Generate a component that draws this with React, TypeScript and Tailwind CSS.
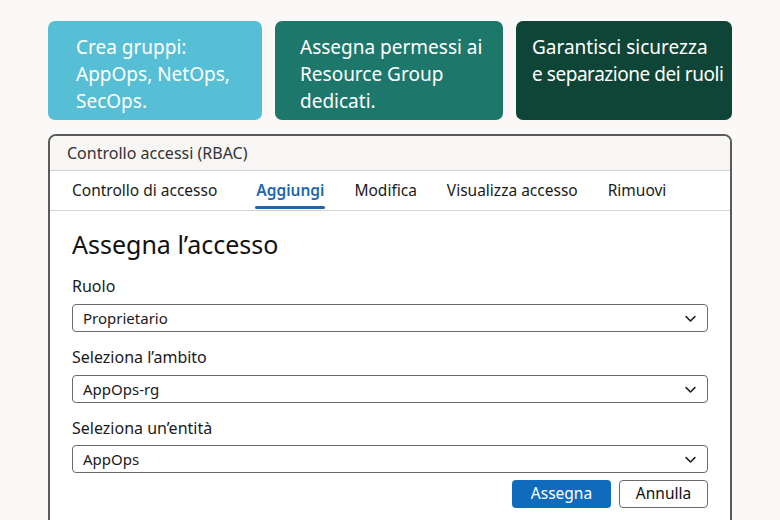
import React from "react";

const Chevron = () => (
  <svg width="15" height="15" viewBox="0 0 24 24" fill="none" stroke="#222" strokeWidth="2.6" strokeLinecap="round" strokeLinejoin="round">
    <path d="M5 9l7 7 7-7" />
  </svg>
);

const Select = ({ value }: { value: string }) => (
  <div className="flex h-[28px] items-center justify-between rounded-[4px] border-[1.5px] border-[#6b6b6b] bg-white pl-[10px] pr-[9px] text-[15px] text-[#1a1a1a]">
    <span>{value}</span>
    <Chevron />
  </div>
);

export default function App() {
  const font = { fontFamily: '"Noto Sans", "Open Sans", sans-serif' };
  return (
    <div className="h-[520px] w-[780px] overflow-hidden bg-[#faf9f7]" style={font}>
      <div className="flex gap-[13px] px-[48px] pt-[21px]">
        <div className="h-[99px] w-[214px] rounded-[7px] bg-[#56bfd6] pl-[28px] pt-[13px] text-[19px] leading-[27px] text-white">
          <div>Crea gruppi:</div>
          <div>AppOps, NetOps,</div>
          <div>SecOps.</div>
        </div>
        <div className="h-[99px] w-[228px] rounded-[7px] bg-[#1e776b] pl-[25px] pt-[13px] text-[19px] leading-[27px] text-white">
          <div>Assegna permessi ai</div>
          <div>Resource Group</div>
          <div>dedicati.</div>
        </div>
        <div className="h-[99px] w-[216px] rounded-[7px] bg-[#0f4536] pl-[16px] pt-[13px] text-[19px] leading-[27px] text-white">
          <div>Garantisci sicurezza</div>
          <div className="whitespace-nowrap tracking-[-0.45px]">e separazione dei ruoli</div>
        </div>
      </div>

      <div className="mx-[48px] mt-[14px] h-[400px] overflow-hidden rounded-t-[8px] border-2 border-[#5a5a5a] bg-white">
        <div className="flex h-[35px] items-center border-b border-[#cfcfcf] bg-[#f7f6f4] pl-[17px] text-[16px] text-[#333]">
          Controllo accessi (RBAC)
        </div>
        <div className="flex h-[40px] items-stretch gap-[30px] border-b-[1.5px] border-[#d4d4d4] pl-[22px] text-[15.5px] text-[#1a1a1a]">
          <div className="flex items-center">Controllo di accesso</div>
          <div className="relative ml-[9px] flex items-center font-semibold text-[#1f66b0]">
            Aggiungi
            <div className="absolute bottom-[1px] left-[-1px] right-[-1px] h-[3px] rounded-full bg-[#1f66b0]" />
          </div>
          <div className="flex items-center">Modifica</div>
          <div className="flex items-center">Visualizza accesso</div>
          <div className="flex items-center">Rimuovi</div>
        </div>
        <div className="px-[22px] pt-[18px]">
          <div className="text-[25px] leading-[30px] text-[#111]">Assegna l’accesso</div>
          <div className="mt-[17px] text-[16px] leading-[20px] text-[#1a1a1a]">Ruolo</div>
          <div className="mt-[8px]"><Select value="Proprietario" /></div>
          <div className="mt-[15px] text-[16px] leading-[20px] text-[#1a1a1a]">Seleziona l’ambito</div>
          <div className="mt-[8px]"><Select value="AppOps-rg" /></div>
          <div className="mt-[15px] text-[16px] leading-[20px] text-[#1a1a1a]">Seleziona un’entità</div>
          <div className="mt-[7px]"><Select value="AppOps" /></div>
          <div className="mt-[7px] flex justify-end gap-[8px]">
            <button className="h-[28px] w-[99px] rounded-[4px] bg-[#0f6cbd] text-[15.5px] text-white">Assegna</button>
            <button className="h-[28px] w-[89px] rounded-[4px] border-[1.5px] border-[#6b6b6b] bg-white text-[15.5px] text-[#111]">Annulla</button>
          </div>
        </div>
      </div>
    </div>
  );
}
